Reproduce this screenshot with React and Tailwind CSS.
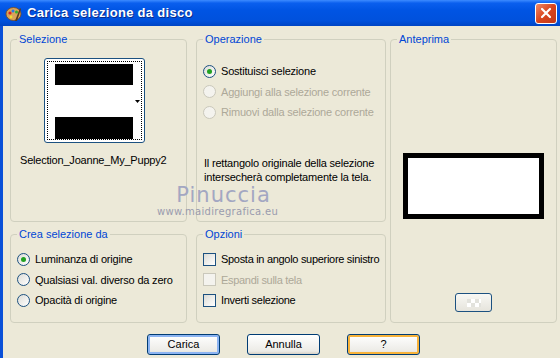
import React from 'react';

const font = { fontFamily: '"Liberation Sans", Arial, sans-serif' };

function Group({ title, className = '', children }) {
  return (
    <fieldset className={`border border-[#d0d0bf] rounded-[4px] px-0 m-0 min-w-0 ${className}`}>
      <legend className="ml-[6px] px-[2px] text-[11px] leading-[13px] text-[#0046d5]">{title}</legend>
      {children}
    </fieldset>
  );
}

function Radio({ checked, disabled, label }) {
  return (
    <div className="flex items-center gap-[5px] h-[20.5px] whitespace-nowrap">
      <span
        className={`w-[13px] h-[13px] shrink-0 rounded-full border flex items-center justify-center ${
          disabled
            ? 'border-[#cac8bb] bg-[#f4f3ee]'
            : 'border-[#1c5180] bg-[linear-gradient(135deg,#dcdcd6,#ffffff)]'
        }`}
      >
        {checked && <span className="w-[5px] h-[5px] rounded-full bg-[#21a121]" />}
      </span>
      <span className={`text-[11px] tracking-[-0.2px] ${disabled ? 'text-[#aca899]' : 'text-black'}`}>{label}</span>
    </div>
  );
}

function Check({ disabled, label }) {
  return (
    <div className="flex items-center gap-[5px] h-[20.5px] whitespace-nowrap">
      <span
        className={`w-[13px] h-[13px] shrink-0 border ${
          disabled
            ? 'border-[#cac8bb] bg-[#f4f3ee]'
            : 'border-[#1c5180] bg-[linear-gradient(135deg,#dcdcd6,#ffffff)]'
        }`}
      />
      <span className={`text-[11px] tracking-[-0.3px] ${disabled ? 'text-[#aca899]' : 'text-black'}`}>{label}</span>
    </div>
  );
}

function Button({ children, glow }) {
  const inner =
    glow === 'blue'
      ? 'shadow-[inset_0_0_0_2px_#8cb4f2]'
      : glow === 'orange'
      ? 'shadow-[inset_0_0_0_2px_#f8b33a]'
      : '';
  return (
    <button
      className={`w-[73px] h-[21px] rounded-[3px] border border-[#003c74] bg-[linear-gradient(#ffffff,#ecebe6_85%,#d6d0c5)] text-[11px] text-black ${inner}`}
    >
      {children}
    </button>
  );
}

export default function App() {
  return (
    <div className="w-[560px] h-[358px] overflow-hidden bg-[#ece9d8] relative select-none" style={font}>
      {/* title bar */}
      <div className="h-[26px] flex items-center pl-[5px] bg-[linear-gradient(#3d8bff_0%,#0a5fee_12%,#0054e3_40%,#0051dc_80%,#0045c4_100%)]">
        <svg width="17" height="17" viewBox="0 0 17 17">
          <ellipse cx="8.5" cy="9" rx="7.5" ry="6.5" fill="#d9a35a" stroke="#7a4a1a" strokeWidth="0.8" />
          <circle cx="5" cy="8" r="1.6" fill="#e02020" />
          <circle cx="8" cy="6" r="1.5" fill="#2a7ae0" />
          <circle cx="11.5" cy="7" r="1.5" fill="#30b030" />
          <circle cx="6" cy="12" r="1.4" fill="#f0e030" />
          <path d="M10 16 L15 3 L16 4 L12 16 Z" fill="#5a3a1a" />
        </svg>
        <span className="ml-[5px] text-white font-bold text-[13px] tracking-[0.3px] [text-shadow:1px_1px_0_#0a2c8a]">
          Carica selezione da disco
        </span>
        <div className="ml-auto mr-[3px] w-[22px] h-[21px] rounded-[3px] border border-white bg-[linear-gradient(135deg,#f08a6a,#d9441c_50%,#c0391a)] flex items-center justify-center">
          <svg width="12" height="12" viewBox="0 0 12 12">
            <path d="M2 2 L10 10 M10 2 L2 10" stroke="white" strokeWidth="2.2" strokeLinecap="round" />
          </svg>
        </div>
      </div>

      <div className="flex h-[332px]">
        <div className="w-[3px] bg-[#0a50d8]" />
        <div className="flex-1 flex flex-col">
          <div className="grid grid-cols-[186px_194px_167px] grid-rows-[189px_95px] gap-y-[6px] pl-[7px] pt-[7px]">
            {/* Selezione */}
            <Group title="Selezione" className="col-start-1 row-start-1 w-[177px]">
              <div className="flex flex-col items-start pt-[12px] pl-[33px]">
                <div className="w-[101px] h-[85px] rounded-[3px] border border-[#1c5180] bg-white p-[2px]">
                  <div className="w-full h-full border border-dotted border-black flex">
                    <div className="w-[80px] flex flex-col pt-[2px] pl-[7px]">
                      <div className="h-[22px] bg-black w-[78px]" />
                      <div className="h-[33px]" />
                      <div className="h-[23px] bg-black w-[78px]" />
                    </div>
                    <div className="flex-1 flex items-center justify-end pr-[1px]">
                      <svg width="5" height="4" viewBox="0 0 5 4" className="mt-[2px]">
                        <path d="M0 0 L5 0 L2.5 3 Z" fill="black" />
                      </svg>
                    </div>
                  </div>
                </div>
                <div className="mt-[9px] -ml-[24px] text-[11px] tracking-[-0.2px] text-black whitespace-nowrap">Selection_Joanne_My_Puppy2</div>
              </div>
            </Group>

            {/* Operazione */}
            <Group title="Operazione" className="col-start-2 row-start-1 w-[190px]">
              <div className="pl-[6px] pt-[15px]">
                <Radio checked label="Sostituisci selezione" />
                <Radio disabled label="Aggiungi alla selezione corrente" />
                <Radio disabled label="Rimuovi dalla selezione corrente" />
                <div className="mt-[33px] pl-[1px] text-[11px] leading-[14px] tracking-[-0.2px] text-black whitespace-nowrap">
                  Il rettangolo originale della selezione
                  <br />
                  intersecherà completamente la tela.
                </div>
              </div>
            </Group>

            {/* Anteprima */}
            <Group title="Anteprima" className="col-start-3 row-start-1 row-span-2">
              <div className="flex flex-col items-center h-full">
                <div className="mt-[107px] w-[141px] h-[66px] border-[5px] border-black bg-white" />
                <div className="mt-[74px] w-[37px] h-[19px] rounded-[3px] border border-[#1c5180] bg-[linear-gradient(#f8f8f4,#e6e4dc)] flex items-center justify-center">
                  <div className="w-[14px] h-[8px] bg-[repeating-conic-gradient(#ffffff_0_25%,#e2e2dc_0_50%)] bg-[length:8px_8px]" />
                </div>
              </div>
            </Group>

            {/* Crea selezione da */}
            <Group title="Crea selezione da" className="col-start-1 row-start-2 w-[177px]">
              <div className="pl-[6px] pt-[8px]">
                <Radio checked label="Luminanza di origine" />
                <Radio label="Qualsiasi val. diverso da zero" />
                <Radio label="Opacità di origine" />
              </div>
            </Group>

            {/* Opzioni */}
            <Group title="Opzioni" className="col-start-2 row-start-2 w-[190px]">
              <div className="pl-[6px] pt-[8px]">
                <Check label="Sposta in angolo superiore sinistro" />
                <Check disabled label="Espandi sulla tela" />
                <Check label="Inverti selezione" />
              </div>
            </Group>
          </div>

          <div className="flex pl-[144px] gap-[27px] mt-[11px]">
            <Button glow="blue">Carica</Button>
            <Button>Annulla</Button>
            <Button glow="orange">?</Button>
          </div>
        </div>
      </div>

      {/* watermark */}
      <div className="absolute left-[157px] top-[184px] flex flex-col items-center pointer-events-none">
        <span className="ml-[12px] text-[21px] leading-[22px] text-[#a3a7c2] tracking-[1px]" style={{ fontFamily: '"DejaVu Sans", sans-serif' }}>Pinuccia</span>
        <span className="text-[10px] leading-[12px] text-[#9a9cae] tracking-[0.3px]" style={{ fontFamily: '"DejaVu Sans", sans-serif' }}>www.maidiregrafica.eu</span>
      </div>
    </div>
  );
}
